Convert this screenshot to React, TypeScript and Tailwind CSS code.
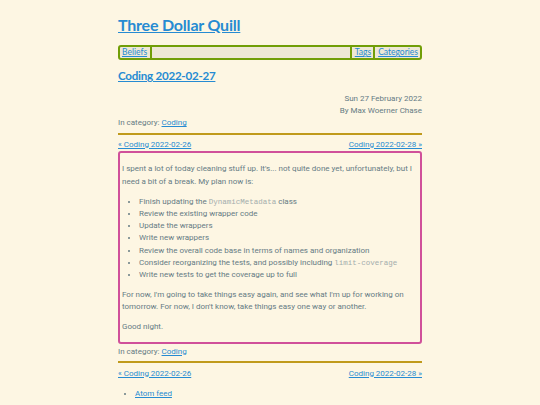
import React from "react";

const body = { fontFamily: 'Roboto, "Liberation Sans", sans-serif' };

function NavPrevNext({ className = "" }: { className?: string }) {
  return (
    <div className={"flex justify-between text-[8px] leading-[12px] " + className}>
      <a href="#" className="text-[#268bd2] underline">« Coding 2022-02-26</a>
      <a href="#" className="text-[#268bd2] underline">Coding 2022-02-28 »</a>
    </div>
  );
}

export default function App() {
  return (
    <div className="min-h-screen bg-[#fdf6e3] text-[#657b83]" style={body}>
      <div className="w-[304px] mx-auto pt-[14px]">
        <h1 className="text-[16px] leading-[22px] font-bold tracking-[-0.2px] font-['Lato','Open_Sans',sans-serif]">
          <a href="#" className="text-[#268bd2] underline">Three Dollar Quill</a>
        </h1>
        <nav className="mt-[9px] h-[15px] flex items-stretch border-2 border-[#719e07] rounded-[3px] bg-[#eee8d5] text-[8.5px] leading-[11px] font-['Lato','Open_Sans',sans-serif]">
          <a href="#" className="pl-[2px] pr-[3px] text-[#268bd2] underline border-r-2 border-[#719e07]">Beliefs</a>
          <div className="flex-1" />
          <a href="#" className="pl-[3px] pr-[2px] text-[#268bd2] underline border-l-2 border-[#719e07]">Tags</a>
          <a href="#" className="pl-[3px] pr-[2px] text-[#268bd2] underline border-l-2 border-[#719e07]">Categories</a>
        </nav>
        <h2 className="mt-[8px] text-[11.6px] leading-[16px] font-bold tracking-[-0.25px] font-['Lato','Open_Sans',sans-serif]">
          <a href="#" className="text-[#268bd2] underline">Coding 2022-02-27</a>
        </h2>
        <div className="mt-[9px] text-right text-[8px] leading-[12.2px]">
          <div>Sun 27 February 2022</div>
          <div>By Max Woerner Chase</div>
        </div>
        <div className="text-[8px] leading-[12px]">
          In category: <a href="#" className="text-[#268bd2] underline">Coding</a>
        </div>
        <div className="mt-[3.5px] h-[2px] bg-[#c09a1c]" />
        <NavPrevNext className="mt-[4px]" />
        <div className="mt-[0.5px] border-2 border-[#d0509a] rounded-[3px] pl-[2px] pr-[3px] pt-[9.5px] pb-[8.5px] text-[8px]">
          <p className="leading-[12.8px]">
            I spent a lot of today cleaning stuff up. It's... not quite done yet, unfortunately, but I need a bit of a break. My plan now is:
          </p>
          <ul className="mt-[7px] list-disc pl-[17px] leading-[12.3px]">
            <li>Finish updating the <code className="font-['Liberation_Mono',monospace] text-[7.5px] text-[#a3adad]">DynamicMetadata</code> class</li>
            <li>Review the existing wrapper code</li>
            <li>Update the wrappers</li>
            <li>Write new wrappers</li>
            <li>Review the overall code base in terms of names and organization</li>
            <li>Consider reorganizing the tests, and possibly including <code className="font-['Liberation_Mono',monospace] text-[7.5px] text-[#a3adad]">limit-coverage</code></li>
            <li>Write new tests to get the coverage up to full</li>
          </ul>
          <p className="mt-[7px] leading-[12.5px]">
            For now, I'm going to take things easy again, and see what I'm up for working on tomorrow. For now, I don't know, take things easy one way or another.
          </p>
          <p className="mt-[7.5px] leading-[12.5px]">Good night.</p>
        </div>
        <div className="mt-[1.5px] text-[8px] leading-[12px]">
          In category: <a href="#" className="text-[#268bd2] underline">Coding</a>
        </div>
        <div className="mt-[3.5px] h-[2px] bg-[#c09a1c]" />
        <NavPrevNext className="mt-[4.5px]" />
        <ul className="mt-[8.5px] list-disc pl-[17px] text-[8px] leading-[12px]">
          <li><a href="#" className="text-[#268bd2] underline">Atom feed</a></li>
        </ul>
      </div>
    </div>
  );
}
